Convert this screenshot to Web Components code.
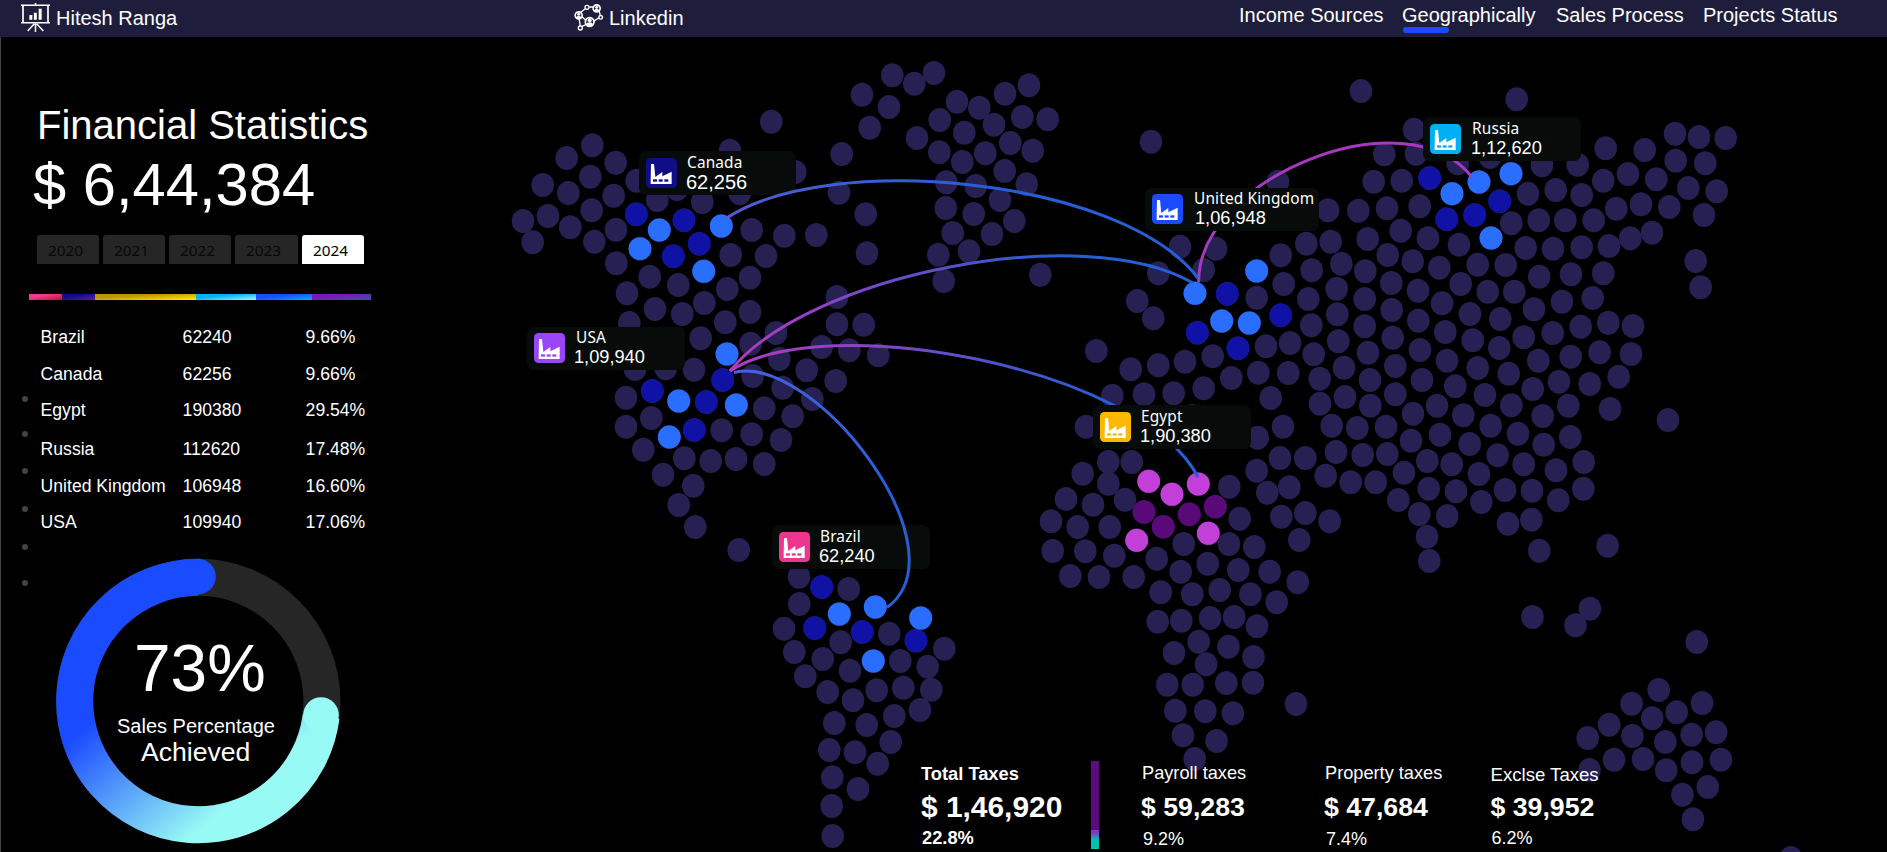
<!DOCTYPE html>
<html lang="en">
<head>
<meta charset="utf-8">
<title>Financial Statistics</title>
<style>
html,body{margin:0;padding:0;background:#000;overflow:hidden}
body{width:1887px;height:852px;font-family:"Liberation Sans",Arial,sans-serif;color:#fff}
</style>
</head>
<body>
<stats-dashboard></stats-dashboard>
<script>
function define(name, html, setup) {
  const tpl = document.createElement('template');
  tpl.innerHTML = html;
  customElements.define(name, class extends HTMLElement {
    constructor() {
      super();
      this.attachShadow({ mode: 'open' }).appendChild(tpl.content.cloneNode(true));
    }
    connectedCallback() { if (setup) setup(this, this.shadowRoot); }
  });
}

/* ---------- icons ---------- */
define('easel-icon', `
<style>:host{display:block;width:30px;height:30px}svg{display:block}</style>
<svg width="30" height="30" viewBox="0 0 90 90" fill="none" stroke="#fff">
  <path d="M0 7H87M0 59.500H87" stroke-width="4.500"/>
  <path d="M6 8V58M81 8V58" stroke-width="5"/>
  <path d="M43.500 0V6M43.500 61V87M40 62L20 84M47 62L67 84" stroke-width="4.500"/>
  <path d="M29.500 36V50M43 29V50M57.500 17V50" stroke-width="9"/>
</svg>`);

define('network-icon', `
<style>:host{display:block;width:30px;height:28px}svg{display:block}</style>
<svg width="30" height="28" viewBox="0 0 90 84" fill="none" stroke="#fff">
  <path d="M18 26L36 13M46 9H58M75 20L79 34M15 42L19 67M24 38L37 50M57 53L76 41M22 68L36 62" stroke-width="4"/>
  <circle cx="39" cy="10" r="6" stroke-width="4"/>
  <circle cx="68" cy="13" r="10.500" stroke-width="5"/>
  <circle cx="14" cy="34" r="10.500" stroke-width="5"/>
  <circle cx="80" cy="40" r="5.500" stroke-width="4"/>
  <circle cx="47" cy="54" r="13" stroke-width="5"/>
  <circle cx="19" cy="72" r="6" stroke-width="4"/>
  <g fill="#fff" stroke="none">
    <circle cx="68" cy="10" r="4.500"/><path d="M60 21Q62 14 68 14T76 21Q68 26 60 21"/>
    <circle cx="14" cy="31" r="4.500"/><path d="M6 41Q8 35 14 35T22 41Q14 47 6 41"/>
    <circle cx="47" cy="49" r="6"/><path d="M36 62Q38 55 47 55T58 62Q47 71 36 62"/>
  </g>
</svg>`);

define('factory-icon', `
<style>
:host{display:block;width:31px;height:30px;border-radius:4.500px;background:var(--tone)}
svg{display:block}
rect{fill:var(--tone)}
</style>
<svg width="31" height="30" viewBox="0 0 93 90">
  <path fill="#fff" d="M15 18H24L28 57L49 42V55L77 41V78H14V70Z"/>
  <rect x="21" y="64" width="12" height="7"/><rect x="38" y="64" width="12" height="7"/><rect x="55" y="64" width="12" height="7"/>
</svg>`);

/* ---------- top bar ---------- */
define('nav-item', `
<style>
:host{display:block;position:relative;font-size:20px;line-height:22px;white-space:nowrap}
i{display:none}
:host([active]) i{display:block;position:absolute;left:1px;top:23px;width:46px;height:6px;border-radius:3px;background:#1b4bff;z-index:-1}
:host([active]){z-index:0}
</style><i></i><slot></slot>`);

define('top-bar', `
<style>
:host{display:grid;grid-template-columns:574px 665px 1fr;height:37px;background:#1e1e3c;box-sizing:border-box;font-size:20px;line-height:22px;white-space:nowrap}
.brand{display:flex;padding:7px 0 0 21px;gap:5px}
.brand easel-icon{margin-top:-4px}
.link{display:flex;padding-top:7px;gap:5px}
.link network-icon{margin-top:-3px}
nav{display:grid;grid-template-columns:163px 154px 147px auto;padding-top:4px;justify-content:start}
</style>
<div class="brand"><easel-icon></easel-icon><span>Hitesh Ranga</span></div>
<div class="link"><network-icon></network-icon><span>Linkedin</span></div>
<nav><nav-item>Income Sources</nav-item><nav-item active>Geographically</nav-item><nav-item>Sales Process</nav-item><nav-item>Projects Status</nav-item></nav>`);

/* ---------- left panel ---------- */
define('year-tabs', `
<style>
:host{display:flex;gap:4px;height:29px}
span{flex:0 0 62px;box-sizing:border-box;padding:4px 0 0 11px;border-radius:3px 3px 0 0;background:#262626;color:#080808;font:15.300px/22px "Noto Sans","Open Sans",sans-serif}
span:nth-of-type(4){flex-basis:63px}
span.on{background:#fff;color:#000}
</style>
<span>2020</span><span>2021</span><span>2022</span><span>2023</span><span class="on">2024</span>`);

define('share-bar', `
<style>
:host{display:grid;grid-template-columns:33px 33px 101px 60px 56px 59px;height:6px}
i:nth-of-type(1){background:linear-gradient(to bottom right,#ee3a96 35%,#c80f1c)}
i:nth-of-type(2){background:linear-gradient(to bottom right,#100d86 35%,#5c1cae)}
i:nth-of-type(3){background:linear-gradient(to bottom right,#c49500 35%,#fff000)}
i:nth-of-type(4){background:linear-gradient(to bottom right,#00b0f4 35%,#98faf4)}
i:nth-of-type(5){background:linear-gradient(to bottom right,#1b4bff 35%,#00adf5)}
i:nth-of-type(6){background:linear-gradient(to bottom right,#7a18be 35%,#38589c)}
</style><i></i><i></i><i></i><i></i><i></i><i></i>`);

define('country-table', `
<style>
:host{display:block;font-size:17.600px;line-height:20px;white-space:nowrap}
.t{display:grid;grid-template-columns:142px 123px auto;grid-template-rows:37px 36px 39px 37px 36px 20px;justify-content:start}
</style><div class="t"></div>`, (el, root) => {
  const rows = [['Brazil','62240','9.66%'],['Canada','62256','9.66%'],['Egypt','190380','29.54%'],['Russia','112620','17.48%'],['United Kingdom','106948','16.60%'],['USA','109940','17.06%']];
  root.querySelector('.t').innerHTML = rows.flat().map(c => `<span>${c}</span>`).join('');
});

define('bullet-rail', `
<style>
:host{display:grid;grid-template-rows:35px 37px 38px 38px 36px 6px}
i{width:6px;height:6px;border-radius:50%;background:#444}
</style><i></i><i></i><i></i><i></i><i></i><i></i>`);

define('progress-ring', `
<style>
:host{display:grid;width:286px;height:286px}
svg,.label{grid-area:1/1}
.label{display:flex;flex-direction:column;align-items:flex-start;white-space:nowrap}
.v{font-size:65.800px;line-height:66px;margin:77px 0 0 79px}
.a{font-size:20px;line-height:22px;margin:14px 0 0 62px}
.b{font-size:26.600px;line-height:28px;margin:1px 0 0 86px}
</style>
<svg width="286" height="286" viewBox="55 558 286 286" fill="none">
  <defs><linearGradient id="g" gradientUnits="userSpaceOnUse" x1="80" y1="732.700" x2="179.700" y2="847.400"><stop offset="0" stop-color="#1b4bff"/><stop offset="1" stop-color="#98faf4"/></linearGradient></defs>
  <circle cx="198.200" cy="701" r="123.700" stroke="#262626" stroke-width="37"/>
  <path d="M198.200 577.300A123.700 123.700 0 1 0 321.100 716.500" stroke="url(#g)" stroke-width="37"/>
  <circle cx="198" cy="576.600" r="17.800" fill="#1b4bff"/>
  <circle cx="321" cy="715" r="17.800" fill="#98faf4"/>
</svg>
<div class="label"><span class="v">73%</span><span class="a">Sales Percentage</span><span class="b">Achieved</span></div>`);

define('side-panel', `
<style>
:host{display:block;box-sizing:border-box;width:480px;height:815px;padding-top:68px;border-left:1px solid #444}
h1{margin:0 0 0 36px;font-weight:400;font-size:40px;line-height:40px;white-space:nowrap}
.sum{margin:10px 0 0 32px;font-size:59.700px;line-height:60px;white-space:nowrap}
year-tabs{margin:20px 0 0 36px}
share-bar{margin:30px 0 0 28px}
.row{display:flex}
bullet-rail{margin:96px 0 0 21px}
.col{display:flex;flex-direction:column}
country-table{margin:27px 0 0 12.600px}
progress-ring{margin:26px 0 0 27px}
</style>
<h1>Financial Statistics</h1>
<div class="sum">$ 6,44,384</div>
<year-tabs></year-tabs>
<share-bar></share-bar>
<div class="row"><bullet-rail></bullet-rail><div class="col"><country-table></country-table><progress-ring></progress-ring></div></div>`);

/* ---------- map ---------- */
define('map-pin', `
<style>
:host{position:absolute;box-sizing:border-box;width:158px;height:44px;border-radius:7px;background:#070c0a;display:flex;padding:7px 0 0 7px;white-space:nowrap}
.txt{display:flex;flex-direction:column;margin-top:-7px}
.n{font:15.400px/20px "Noto Sans","Open Sans",sans-serif;letter-spacing:.15px;margin-left:var(--nx,10px);padding-top:2px}
.v{font-size:var(--fs,18.200px);line-height:20px;margin-left:var(--vx,9px);margin-top:-1px}
</style>
<factory-icon></factory-icon>
<div class="txt"><span class="n"><slot></slot></span><span class="v"><slot name="value"></slot></span></div>`);

/* Dot clusters: origin, horizontal and vertical units per pixel, then x,y pairs. */
const CLUSTERS = [
  { x:480, y:0, sx:3, sy:3,
    land:'1237,226 1303,251 1362,219 1146,284 1227,321 1169,383 1085,462 874,365 750,452 337,436 260,474 407,488 188,555 265,579 331,530 401,587 470,542 946,516 129,663 204,648 271,682 335,631 158,727 343,725 408,689 409,790 532,600 591,567 667,606 779,580 815,690 752,765 858,768 913,707 1009,705 1077,578 1157,643 1161,760 509,830 595,855 742,867 810,833 441,880 1379,360 1311,414 1378,457 1375,764 1391,843',
    navy:'469,643 612,661 658,731 580,769', blue:'538,690 480,746 724,678 671,814' },
  { x:480, y:280, sx:3, sy:3,
    land:'525,87 607,102 673,69 736,127 810,96 448,129 662,175 812,191 888,159 1071,51 1071,133 1151,134 1025,201 1108,211 1195,226 642,269 557,265 465,267 818,288 898,237 980,271 908,323 997,357 1067,303 438,353 438,440 514,414 853,385 938,409 725,451 815,463 903,480 490,509 613,535 692,543 768,537 853,552 549,584 640,617 596,675 646,741 776,810 957,890',
    blue:'741,222 596,363 769,375 568,471', navy:'517,333 728,300 679,366 643,450' },
  { x:720, y:540, sx:3, sy:3,
    land:'386,147 238,192 192,266 508,281 362,307 223,336 308,357 390,392 541,363 673,326 623,380 256,409 323,456 399,481 470,451 550,443 634,449 600,510 343,549 440,555 523,528 512,606 328,630 405,637 473,671 337,712 414,747 335,798 338,888 1051,108 1137,111 1241,111 1382,95 1322,157 1417,163 1313,245 1384,242 1362,339 1436,305 1342,434 1418,434 1366,512 1389,586 1424,657',
    navy:'305,141 284,264 427,276 588,302', blue:'358,222 466,201 602,234 460,363' },
  { x:960, y:0, sx:3, sy:3,
    land:'-9,305 58,323 135,281 207,256 102,374 187,351 263,358 13,398 7,486 76,460 151,429 218,452 134,513 200,553 -41,547 47,558 120,600 41,642 -43,624 163,663 96,702 -22,699 27,754 241,824 573,425 1203,273 1362,389 954,545 1273,463 1368,461 1241,545 1325,542 1104,631 1195,632 1281,625 1379,619 660,740 768,746 731,810 595,820 1039,731 1112,725 962,766 1144,791 1223,717 1322,692 1404,715 1283,765 1216,814 1055,811 971,852 890,893 1130,866 1045,897 1214,897 1294,849 1358,784 1374,872',
    navy:'1409,534 802,881', blue:'890,813 705,880' },
  { x:1407, y:0, sx:3, sy:3,
    land:'329,298 152,490 249,471 405,496 512,494 596,445 713,450 804,401 876,411 956,414 806,482 895,490 589,542 663,522 748,538 844,564 929,574 363,581 446,570 524,585 628,626 702,613 787,621 891,645 313,670 395,661 475,661 560,661 735,698 670,715 606,738 524,742 438,746 356,744 156,734 97,803 212,794 296,795 397,830 492,823 589,820 161,852 242,875 322,875 866,783 881,862',
    navy:'278,604 119,658 203,645', blue:'216,546 135,581 312,521 252,714' },
  { x:1407, y:280, sx:3, sy:3,
    land:'105,70 189,102 280,117 381,88 465,65 557,54 604,128 678,138 521,140 437,159 350,172 34,122 115,156 197,181 277,204 39,210 120,242 212,264 305,281 394,242 491,230 578,217 672,222 635,290 548,312 456,305 377,327 45,300 145,319 234,345 313,376 407,408 484,377 609,387 783,420 90,377 169,406 251,437 333,461 410,494 490,471 18,401 99,464 188,492 272,526 350,553 447,571 530,546 529,626 454,661 375,632 294,630 216,582 134,553 61,543 12,482 -9,578 65,626 147,634 223,666 37,702 121,708 60,770 67,843 303,731 373,719 397,812 602,797 -26,660' },
  { x:960, y:280, sx:3, sy:3,
    land:'532,63 580,115 409,213 1054,136 1132,103 1214,139 1295,90 990,189 918,199 1061,223 1135,184 1298,173 1224,218 1152,263 758,229 675,245 595,256 512,268 814,294 895,278 985,279 1079,296 1230,300 1306,258 457,347 552,343 641,340 731,325 697,408 932,354 1080,371 1155,351 1231,377 1306,343 378,440 893,473 969,440 1115,437 1192,444 1278,440 960,534 1036,534 1128,516 1208,525 1282,522 890,572 445,546 515,546 368,581 445,611 495,659 318,657 399,674 273,724 353,741 449,741 278,813 376,814 463,827 808,620 839,716 922,638 988,622 1097,587 1172,607 1247,607 964,710 1036,699 1109,724 1018,780 671,792 807,792 883,801 590,836 743,851 835,870 929,875',
    blue:'785,123 868,129', navy:'962,106 712,158 834,205',
    pink:'566,604 636,643 715,612 745,760 530,781', plum:'552,696 610,740 688,703 766,680' },
  { x:1200, y:540, sx:2.2824, sy:3,
    land:'223,127 45,150 115,163 175,187 23,234 78,231 130,259 65,320 14,373 122,351 60,429 121,428 12,514 75,520 38,603 219,492 759,231 890,206 857,256 1134,306 1047,450 985,491 1146,489 1088,517 1032,535 934,554 885,594 987,588 1062,606 1122,584 1178,577 945,659 1011,657 1189,659 1123,667 1064,691 889,690 1159,741 1101,764 1125,838 1349,954' }
];
const TONES = { navy:'#0f12a5', blue:'#2a6eff', pink:'#c23fd8', plum:'#5a0a78' };

/* Trade routes: each is the cubic Bezier that runs closest to its waypoints. */
const ROUTES = [
  { c:'url(#us)', p:'730,371 756,344 790,323 837,300 880,284 920,274 960,266.500 1017,258 1067,256 1120,259 1160,267.500 1193,283' },
  { c:'url(#eg)', p:'730,371 753,357 787,349.500 843,346 897,348.700 960,356.700 1010,366.500 1060,382.500 1114,405 1150,426 1177,449 1189,463 1198,477' },
  { c:'#a63abf', p:'1198.700,282 1202,257 1215,231 1233,209 1257,188 1293,167 1327,153 1360,145.500 1390,143.500 1423,146.700 1440,152 1455,161 1472,177' }
];
/* These two pass in front of the pins. */
const FRONT_ROUTES = [
  { c:'url(#ca)', p:'725,219 763,199.500 797,191 840,183.700 893,181 960,184.200 1007,190.500 1043,198 1085,209.500 1120,222.500 1167,247 1187,263 1198,278' },
  { c:'url(#br)', p:'734,372.500 753,372.500 780,380 813,399 847,432 880,477 900,517 908.700,553 909.500,566 905,585 897,600 887,607.500' }
];

function fitCubic(p) {
  const n = p.length - 1, A = p[0], D = p[n];
  const t = [0];
  for (let i = 1; i <= n; i++) t[i] = t[i - 1] + Math.hypot(p[i][0] - p[i - 1][0], p[i][1] - p[i - 1][1]);
  const total = t[n];
  for (let i = 0; i <= n; i++) t[i] /= total;
  let B, C;
  const at = u => [0, 1].map(k => (1-u)**3*A[k] + 3*(1-u)**2*u*B[k] + 3*(1-u)*u*u*C[k] + u**3*D[k]);
  for (let pass = 0; pass < 60; pass++) {
    let bb = 0, bc = 0, cc = 0; const rb = [0, 0], rc = [0, 0];
    for (let i = 1; i < n; i++) {
      const u = t[i], fb = 3*(1-u)**2*u, fc = 3*(1-u)*u*u;
      bb += fb*fb; bc += fb*fc; cc += fc*fc;
      for (const k of [0, 1]) {
        const r = p[i][k] - (1-u)**3*A[k] - u**3*D[k];
        rb[k] += fb*r; rc[k] += fc*r;
      }
    }
    const det = bb*cc - bc*bc;
    B = [0, 1].map(k => (cc*rb[k] - bc*rc[k]) / det);
    C = [0, 1].map(k => (bb*rc[k] - bc*rb[k]) / det);
    for (let i = 1; i < n; i++) {
      let best = 1e9, bu = t[i];
      for (let s = -20; s <= 20; s++) {
        const u = Math.min(1, Math.max(0, t[i] + s*.002)), q = at(u), e = Math.hypot(q[0]-p[i][0], q[1]-p[i][1]);
        if (e < best) { best = e; bu = u; }
      }
      t[i] = bu;
    }
  }
  return [B, C];
}
function curve(r) {
  const p = r.p.split(' ').map(s => s.split(',').map(Number));
  const [b, c] = fitCubic(p);
  return `<path d="M${p[0]}C${b} ${c} ${p[p.length - 1]}" fill="none" stroke="${r.c}" stroke-width="3"/>`;
}
function dots() {
  let land = '', marks = '';
  for (const k of CLUSTERS) {
    const at = s => s.split(' ').map(q => { const [a, b] = q.split(',').map(Number); return [(k.x + a / k.sx).toFixed(1), (k.y + b / k.sy).toFixed(1)]; });
    for (const [x, y] of at(k.land)) land += `<ellipse cx="${x}" cy="${y}" rx="11.300" ry="12"/>`;
    for (const t in TONES) if (k[t]) for (const [x, y] of at(k[t])) {
      land += `<ellipse cx="${x}" cy="${y}" rx="11.300" ry="12"/>`;
      marks += `<circle cx="${x}" cy="${y}" r="11.500" fill="${TONES[t]}"/>`;
    }
  }
  return `<g fill="#262152">${land}</g>${marks}`;
}

define('tax-item', `
<style>
:host{display:flex;flex-direction:column;white-space:nowrap}
.k{font-size:18.200px;line-height:20px}
.v{font-size:26.700px;line-height:30px;font-weight:700;margin:9px 0 0 -1px}
.p{font-size:18px;line-height:20px;margin:7px 0 0 1px}
:host([total]) .k,:host([total]) .p{font-weight:700;font-size:18.300px}
:host([total]) .k{padding-top:1px}
:host([total]) .v{font-size:29.900px;margin:8px 0 0 0}
:host([total]) .p{margin-top:6px}
:host([low]) .k{margin-top:2px;font-size:18.600px}
:host([low]) .v{margin:7px 0 0 0}
:host([low]) .p{margin-top:6px}
</style>
<span class="k"><slot></slot></span><span class="v"><slot name="amount"></slot></span><span class="p"><slot name="share"></slot></span>`);

define('tax-strip', `
<style>
:host{display:grid;grid-template-columns:170px 51px 183px 165.500px auto;align-items:start;justify-content:start}
i{display:block;width:8px;height:88px;margin-top:-2px;background:linear-gradient(#5c0a7c 69px,#7a3cc8 69px,#7a3cc8 72px,#00c4b0 79px)}
</style>
<tax-item total>Total Taxes<span slot="amount">$ 1,46,920</span><span slot="share">22.8%</span></tax-item>
<i></i>
<tax-item>Payroll taxes<span slot="amount">$ 59,283</span><span slot="share">9.2%</span></tax-item>
<tax-item>Property taxes<span slot="amount">$ 47,684</span><span slot="share">7.4%</span></tax-item>
<tax-item low>Exclse Taxes<span slot="amount">$ 39,952</span><span slot="share">6.2%</span></tax-item>`);

define('world-map', `
<style>
:host{display:block;position:relative;width:1407px;height:815px}
svg{display:block;position:absolute;left:0;top:0;pointer-events:none}
tax-strip{position:absolute;left:441px;top:726px}
</style>
<svg class="base" width="1407" height="815" viewBox="480 37 1407 815"></svg>
<map-pin style="left:159px;top:114px;width:157px;--tone:#100d86;--vx:9px;--fs:20px">Canada<span slot="value">62,256</span></map-pin>
<map-pin style="left:47px;top:290px;height:43px;padding-top:6px;--tone:#9a45f8;--nx:11px">USA<span slot="value">1,09,940</span></map-pin>
<map-pin style="left:292px;top:488px;--tone:#ee3590">Brazil<span slot="value">62,240</span></map-pin>
<map-pin style="left:665px;top:151px;width:174px;height:43px;padding-top:6px;--tone:#1b4bff;--nx:11px;--vx:12px">United Kingdom<span slot="value">1,06,948</span></map-pin>
<map-pin style="left:943px;top:80px;--tone:#00b0f4;--nx:11px;--vx:10px">Russia<span slot="value">1,12,620</span></map-pin>
<map-pin style="left:613px;top:368px;--tone:#ffb800;--vx:9px">Egypt<span slot="value">1,90,380</span></map-pin>
<svg class="over" width="1407" height="815" viewBox="480 37 1407 815"></svg>
<tax-strip></tax-strip>`, (el, root) => {
  const grad = (id, x1, x2, stops) => `<linearGradient id="${id}" gradientUnits="userSpaceOnUse" x1="${x1}" y1="0" x2="${x2}" y2="0">${stops.map(s => `<stop offset="${s[0]}" stop-color="${s[1]}"/>`).join('')}</linearGradient>`;
  root.querySelector('.base').innerHTML = `<defs>${
    grad('us', 730, 1060, [[0, '#b03cc0'], [.4, '#7a48c8'], [.8, '#4056cc'], [1, '#265ed5']])}${
    grad('eg', 730, 1110, [[0, '#b03cc0'], [.35, '#8a44c4'], [.7, '#4a54c8'], [1, '#265ed5']])}</defs>`
    + dots() + ROUTES.map(curve).join('');
  root.querySelector('.over').innerHTML = `<defs>${
    grad('ca', 725, 1000, [[0, '#5a58d0'], [.3, '#3f5fd2'], [1, '#265ed5']])}${
    grad('br', 734, 900, [[0, '#4c60dc'], [1, '#265ed5']])}</defs>` + FRONT_ROUTES.map(curve).join('');
});

define('stats-dashboard', `
<style>
:host{display:flex;flex-direction:column;width:1887px;height:852px;background:#000;overflow:hidden}
main{display:grid;grid-template-columns:480px 1407px}
</style>
<top-bar></top-bar>
<main><side-panel></side-panel><world-map></world-map></main>`);
</script>
</body>
</html>
